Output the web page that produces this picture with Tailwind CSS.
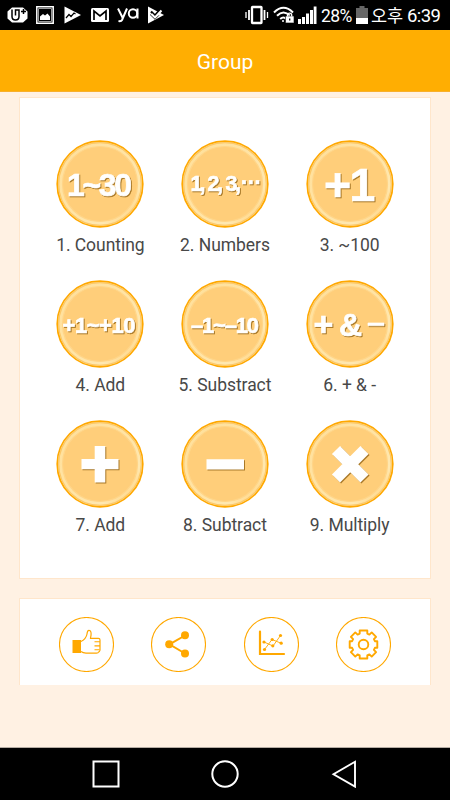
<!DOCTYPE html>
<html lang="en">

<head>
  <meta charset="UTF-8" />
  <meta name="viewport" content="width=device-width, initial-scale=1.0" />
  <title>Group</title>
  <script src="https://cdn.jsdelivr.net/npm/@tailwindcss/browser@4"></script>
</head>

<body class="w-[450px] h-[800px] overflow-hidden flex flex-col bg-[#fff1e3] font-['Roboto','Noto_Sans_CJK_KR',sans-serif]">

  <!-- Status bar -->
  <div class="h-[30px] shrink-0 bg-black text-white flex items-center">
    <svg class="ml-[7px] w-[21px] h-[30px]" viewBox="0 0 21 30">
      <path d="M5 7.500h11l4.500 4v7l-4.500 4H5l-4.500-4v-7z" fill="#fff" />
      <path d="M5 9.500v7q0 3.500 3.500 3.500t3.500-3.500v-6.500h-3.500v5.500M16.500 9v5M14 11.500h5" fill="none" stroke="#000" stroke-width="1.500" />
    </svg>
    <svg class="ml-2 w-[18px] h-[30px]" viewBox="0 0 18 30">
      <path d="M.8 6.800h16.400v16.400H.8z" fill="none" stroke="#fff" stroke-width="1.500" />
      <path d="M2.500 8.500h13v13h-13z" fill="none" stroke="#999" />
      <path d="M4 20v-3.500l3-2.500 2 1.500 2.500-2 2.500 3V20z" fill="#fff" />
    </svg>
    <svg class="ml-2.5 w-[17px] h-[30px]" viewBox="0 0 17 30">
      <path d="M0.500 6.500 17 15 0.500 23.500z" fill="#fff" />
      <path d="M2 18l3-3.500 2 2 3-3.500 1.500 1" fill="none" stroke="#000" stroke-width="1.200" />
    </svg>
    <svg class="ml-2.5 w-[18px] h-[30px]" viewBox="0 0 18 30">
      <rect y="8" width="18" height="14" rx="1.500" fill="#fff" />
      <path d="M3 20V11L9 16l6-5v9" fill="none" stroke="#000" stroke-width="1.700" />
    </svg>
    <svg class="ml-2 w-[22px] h-[30px]" viewBox="0 0 22 30" fill="none" stroke="#fff" stroke-width="2">
      <path d="M1 8.500l4.500 9M10 8.500 5 20q-.7 1.500-3.500 1" />
      <circle cx="16" cy="13.500" r="4.200" />
      <path d="M20.500 8.500v10" />
    </svg>
    <svg class="ml-[9px] w-[16px] h-[30px]" viewBox="0 0 16 30">
      <path d="M0 6.500 16 15 0 23.500z" fill="#fff" />
      <path d="M3 11.500l4 4 7-8" fill="none" stroke="#000" stroke-width="2.200" />
      <path d="M3.500 14l3.500 3.500 6.500-7" fill="none" stroke="#fff" stroke-width="2" />
      <path d="M2 14.500l5 4.800 4-4" fill="none" stroke="#000" stroke-width=".8" />
    </svg>

    <svg class="ml-[81px] w-[24px] h-[30px]" viewBox="0 0 24 30" fill="none" stroke="#fff">
      <rect x="7" y="7" width="9.500" height="16" rx=".5" stroke-width="2.300" />
      <path d="M4 10v10M19.500 10v10" stroke-width="1.800" />
      <path d="M1 12v6M22.500 12v6" stroke-width="1.300" />
    </svg>
    <svg class="ml-[4px] w-[22px] h-[30px]" viewBox="0 0 22 30" fill="none" stroke="#fff" stroke-width="2">
      <path d="M1 12.500q9.500-9.500 19 0M4 15.700q6.500-6.500 13 0M7.200 19q3.300-3 6 0" />
      <circle cx="10" cy="21" r="1" fill="#fff" stroke="none" />
      <rect x="12.500" y="16" width="8.500" height="7" rx=".5" fill="#fff" stroke="#000" stroke-width=".6" />
      <path d="M14.500 16.500v-1.300a2 2 0 0 1 4.200 0v1.300" stroke-width="1.300" />
      <path d="M16.700 18.500v2" stroke="#000" stroke-width="1.300" />
    </svg>
    <svg class="ml-[3px] w-[19px] h-[30px]" viewBox="0 0 19 30" fill="#fff">
      <path d="M0 19h3v5H0zM4 17h3v7H4zM8 13.500h3V24H8zM12 10h3v14h-3zM15.700 6.500h2.800V24h-2.800z" />
    </svg>
    <span class="ml-[4px] w-[34px] text-[17.500px] leading-[30px] tracking-[-0.600px] pt-[2px]">28%</span>
    <svg class="ml-[1px] w-[12px] h-[30px]" viewBox="0 0 12 30">
      <path d="M3.500 6h5v2H12v10.500H0V8h3.500z" fill="#666" />
      <path d="M0 18h12v6H0z" fill="#fff" />
    </svg>
    <span class="ml-[3px] w-[36px] text-[17.500px] leading-[30px] pt-[2px]">오후</span>
    <span class="w-[40px] text-[18.500px] leading-[30px] tracking-[-0.600px] pt-[2px]">6:39</span>
  </div>

  <!-- Title bar -->
  <div class="h-[62px] shrink-0 bg-[#ffae02] border-b border-[#f8b02c] text-white text-[21px] leading-[64px] text-center">Group</div>

  <!-- Lessons -->
  <div class="mt-[5px] mx-[19px] h-[482px] shrink-0 bg-white border border-[#ffe6cb] px-[18px] pt-[42px]">
    <svg class="absolute w-0 h-0">
      <defs>
        <linearGradient id="ring" x1="0" y1="0" x2="1" y2="1">
          <stop offset="0" stop-color="#ffdf98" />
          <stop offset=".5" stop-color="#ffe4a6" />
          <stop offset=".75" stop-color="#ffe8b0" />
          <stop offset=".86" stop-color="#ffd88c" />
          <stop offset="1" stop-color="#ffd584" />
        </linearGradient>
      </defs>
    </svg>
    <div id="lessons" class="grid grid-cols-3 auto-rows-[140px]"></div>
  </div>

  <!-- Toolbar -->
  <div class="mt-[19px] mx-[19px] h-[87px] shrink-0 bg-white border border-b-0 border-[#ffe6cb] flex gap-[37.400px] pl-[39px] pt-[17.500px]">
    <svg class="w-[55px] h-[55px]" viewBox="0 0 55 55" fill="none" stroke="#ffa800">
      <circle cx="27.500" cy="27.500" r="27" stroke-width="1.100" />
      <path d="M13.500 23h8.500v13h-8.500z" fill="#ffa800" stroke="none" />
      <path d="M22 24.500c3-1.500 5.500-4.500 6-7.500.2-3 1-3.700 2-3.700 2 0 2.300 2.700 2 5-.2 1.500-.5 2-.5 3h8q1.500 0 1.500 1.800v10q-.5 2-1.500 2-.2 1-2 1H27q-3 0-5-1.500" stroke-width="1.200" />
      <path d="M35.500 24.800H41M35.500 28.900H41M35.500 32.800h5" stroke-width="1.100" />
    </svg>
    <svg class="w-[55px] h-[55px]" viewBox="0 0 55 55" fill="none" stroke="#ffa800">
      <circle cx="27.500" cy="27.500" r="27" stroke-width="1.100" />
      <path d="M34 18.500 18.500 27.300 34 36.500" stroke-width="2" />
      <g fill="#ffa800" stroke="none">
        <circle cx="18.200" cy="27.300" r="4" />
        <circle cx="34" cy="18.300" r="4" />
        <circle cx="34" cy="36.500" r="4" />
      </g>
    </svg>
    <svg class="w-[55px] h-[55px]" viewBox="0 0 55 55" fill="none" stroke="#ffa800">
      <circle cx="27.500" cy="27.500" r="27" stroke-width="1.100" />
      <path d="M16 14.500V37h24" stroke-width="2.200" stroke-linecap="round" />
      <path d="M20 25l9 4 7.500-10.500M20.500 32.500l7.500-10 9 3.700" stroke-width=".9" />
      <g fill="#ffa800" stroke="none">
        <circle cx="20" cy="25" r="1.600" />
        <circle cx="28.800" cy="28.800" r="1.600" />
        <circle cx="36.500" cy="18.500" r="1.600" />
        <circle cx="20.500" cy="32.500" r="1.600" />
        <circle cx="28.200" cy="22.500" r="1.600" />
        <circle cx="37.200" cy="26.200" r="1.600" />
      </g>
    </svg>
    <svg class="w-[55px] h-[55px]" viewBox="0 0 55 55" fill="none" stroke="#ffa800">
      <circle cx="27.500" cy="27.500" r="27" stroke-width="1.100" />
      <circle cx="27.500" cy="27.500" r="4.800" stroke-width="1.900" />
      <path stroke-width="1.900" stroke-linejoin="round" d="M23.700 13.500h7.600v3.100l2.100 1 2.300-2.200 4.400 4.400-2.200 2.300 1 2.100h2.400v6.600h-2.400l-1 2.100 2.200 2.300-4.400 4.400-2.300-2.200-2.100 1v3.100h-7.600v-3.100l-2.100-1-2.300 2.200-4.400-4.400 2.200-2.300-1-2.100h-2.400v-6.600h2.400l1-2.100-2.200-2.300 4.400-4.400 2.300 2.200 2.100-1z" />
    </svg>
  </div>

  <!-- Navigation bar -->
  <div class="mt-auto h-[53px] shrink-0 bg-black border-t border-[#b5aca3] flex justify-center items-center gap-[91px]">
    <svg class="w-[28px] h-[28px]" viewBox="0 0 28 28" fill="none" stroke="#fff" stroke-width="2">
      <path d="M1.500 1.500h25v25h-25z" />
    </svg>
    <svg class="w-[28px] h-[28px]" viewBox="0 0 28 28" fill="none" stroke="#fff" stroke-width="2">
      <circle cx="14" cy="14" r="12.700" />
    </svg>
    <svg class="w-[28px] h-[28px]" viewBox="0 0 28 28" fill="none" stroke="#fff" stroke-width="1.900">
      <path d="M25 1.800v24.800L3.500 14.200z" />
    </svg>
  </div>

  <script>
    const lessons = [
      { label: '1. Counting', face: '<text x="11" y="56" font-size="32" textLength="65">1~30</text>' },
      { label: '2. Numbers', face: '<text x="9.500 18.500 26.500 36 44.500 54" y="51" font-size="21.500">1,2,3,</text><text x="60 66.700 73.400" y="49.500" font-size="21.500">···</text>' },
      { label: '3. ~100', face: '<text x="18 43.500" y="61" font-size="46.500">+1</text>' },
      { label: '4. Add', face: '<text x="6.500" y="52.700" font-size="22" textLength="73">+1~+10</text>' },
      { label: '5. Substract', face: '<text x="10" y="52.700" font-size="22" textLength="68">–1~–10</text>' },
      { label: '6. + & -', face: '<text x="7.500" y="56" font-size="34">+</text><text x="33" y="56" font-size="32">&amp;</text><path d="M62 43h16v2.700H62z" />' },
      { label: '7. Add', face: '<path d="M38.700 26h10.600v13h13.200v10.300H49.300v13.200H38.700V49.300H25.500V39h13.200z" stroke="none" />' },
      { label: '8. Subtract', face: '<path d="M25.500 39.300h37.500v10.300H25.500z" stroke="none" />' },
      { label: '9. Multiply', face: '<path d="M30 30l28.500 28.500M58.500 30 30 58.500" stroke-width="11.500" />' },
    ];

    const container = document.getElementById('lessons');
    lessons.forEach(lesson => {
      const cell = document.createElement('div');
      cell.className = 'flex flex-col items-center';
      cell.innerHTML = `
        <svg class="w-[88px] h-[88px]" viewBox="0 0 88 88">
          <circle cx="44" cy="44" r="42.800" fill="url(#ring)" stroke="#ffa800" stroke-width="1.700" />
          <circle cx="44" cy="44" r="41.300" fill="none" stroke="#fcc868" stroke-width="1.200" />
          <circle cx="44" cy="44" r="37.500" fill="#ffce7a" stroke="#ffd588" stroke-width="1.200" />
          <g class="drop-shadow-[1px_1px_0.5px_#a87828] font-['Liberation_Sans',sans-serif] font-bold" fill="#fff" stroke="#fff" stroke-width=".7">${lesson.face}</g>
        </svg>`;

      const label = document.createElement('span');
      label.className = 'mt-[4px] text-[17.500px] leading-[26px] text-[#484848] tracking-[-0.050px] whitespace-nowrap';
      label.textContent = lesson.label;
      cell.appendChild(label);
      container.appendChild(cell);
    });
  </script>
</body>

</html>
